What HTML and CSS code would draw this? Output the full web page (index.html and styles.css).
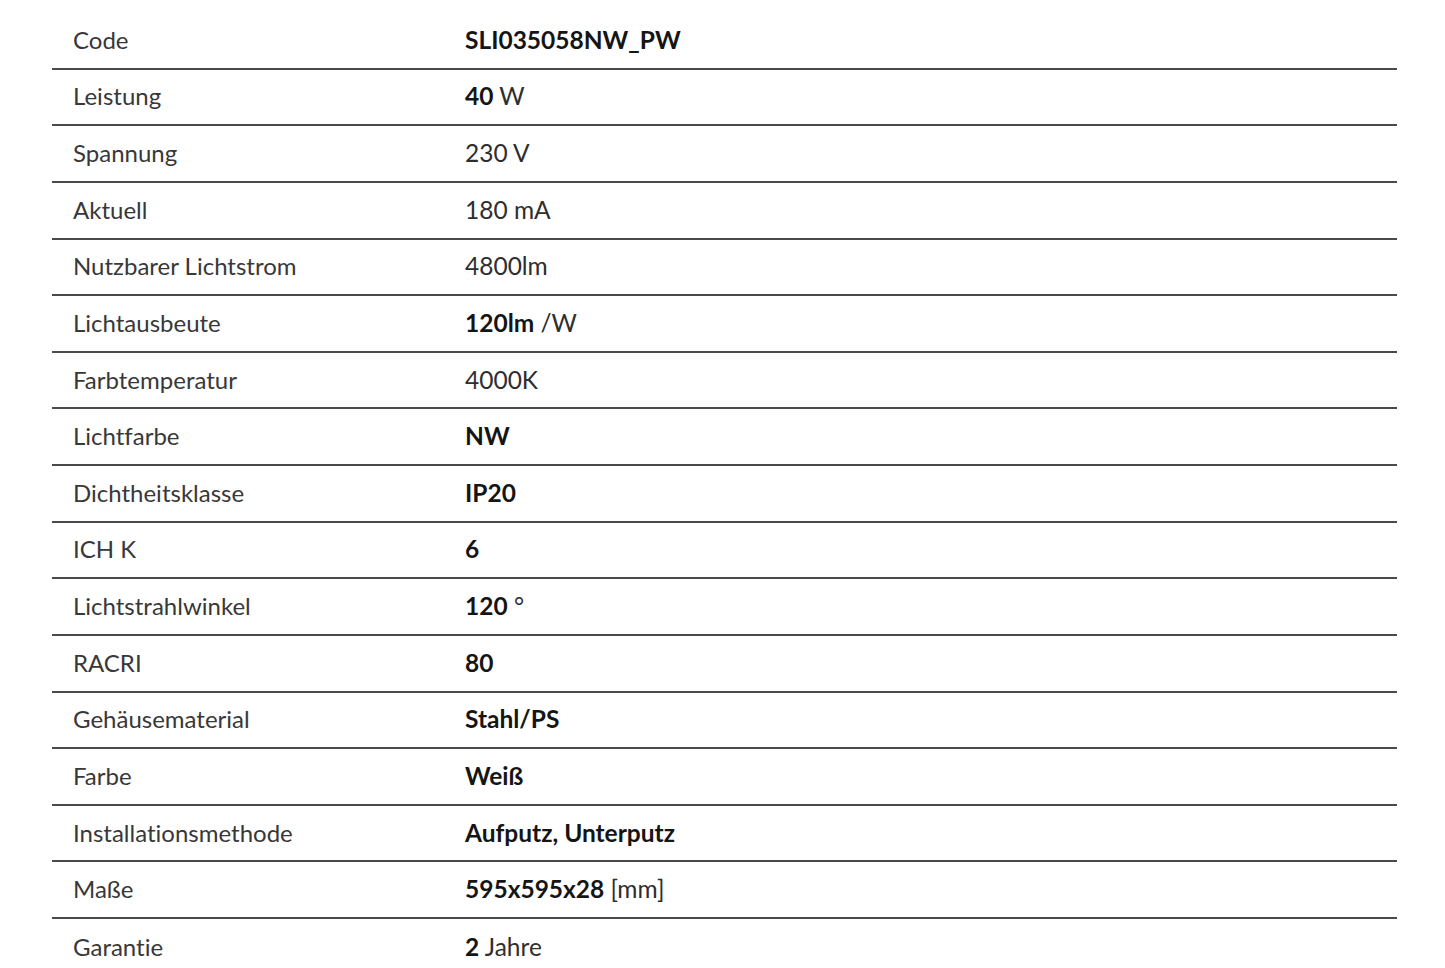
FILE: index.html
```html
<!DOCTYPE html>
<html lang="de">
<head>
<meta charset="utf-8">
<title>Technische Daten</title>
<link rel="stylesheet" href="styles.css">
</head>
<body>
<div class="specs">
  <div class="row"><div class="label">Code</div><div class="value"><b>SLI035058NW_PW</b></div></div>
  <div class="row"><div class="label">Leistung</div><div class="value"><b>40</b> W</div></div>
  <div class="row"><div class="label">Spannung</div><div class="value">230 V</div></div>
  <div class="row"><div class="label">Aktuell</div><div class="value">180 mA</div></div>
  <div class="row"><div class="label">Nutzbarer Lichtstrom</div><div class="value">4800lm</div></div>
  <div class="row"><div class="label">Lichtausbeute</div><div class="value"><b>120lm</b> /W</div></div>
  <div class="row"><div class="label">Farbtemperatur</div><div class="value">4000K</div></div>
  <div class="row"><div class="label">Lichtfarbe</div><div class="value"><b>NW</b></div></div>
  <div class="row"><div class="label">Dichtheitsklasse</div><div class="value"><b>IP20</b></div></div>
  <div class="row"><div class="label">ICH K</div><div class="value"><b>6</b></div></div>
  <div class="row"><div class="label">Lichtstrahlwinkel</div><div class="value"><b>120</b> °</div></div>
  <div class="row"><div class="label">RACRI</div><div class="value"><b>80</b></div></div>
  <div class="row"><div class="label">Gehäusematerial</div><div class="value"><b>Stahl/PS</b></div></div>
  <div class="row"><div class="label">Farbe</div><div class="value"><b>Weiß</b></div></div>
  <div class="row"><div class="label">Installationsmethode</div><div class="value"><b>Aufputz, Unterputz</b></div></div>
  <div class="row"><div class="label">Maße</div><div class="value"><b>595x595x28</b> [mm]</div></div>
  <div class="row last"><div class="label">Garantie</div><div class="value"><b>2</b> Jahre</div></div>
</div>
</body>
</html>
```
FILE: styles.css
```css
html, body {
  margin: 0;
  padding: 0;
  background: #ffffff;
}
body {
  font-family: "Lato", "Open Sans", sans-serif;
  font-size: 24.5px;
  font-variant-ligatures: no-common-ligatures;
  color: #333333;
  overflow: hidden;
}
.specs {
  margin-left: 52px;
  width: 1345px;
  padding-top: 13px;
}
.row {
  display: grid;
  grid-template-columns: 413px 1fr;
  align-items: center;
  box-sizing: border-box;
  height: 56.63px;
  padding-bottom: 2px;
  border-bottom: 2px solid #4a4a4a;
}
.row.last {
  border-bottom: none;
}
.label {
  padding-left: 21px;
  font-size: 24px;
  color: #383838;
}
.value {
  color: #2e2e2e;
}
.value b {
  font-weight: 700;
  color: #151515;
}
```
